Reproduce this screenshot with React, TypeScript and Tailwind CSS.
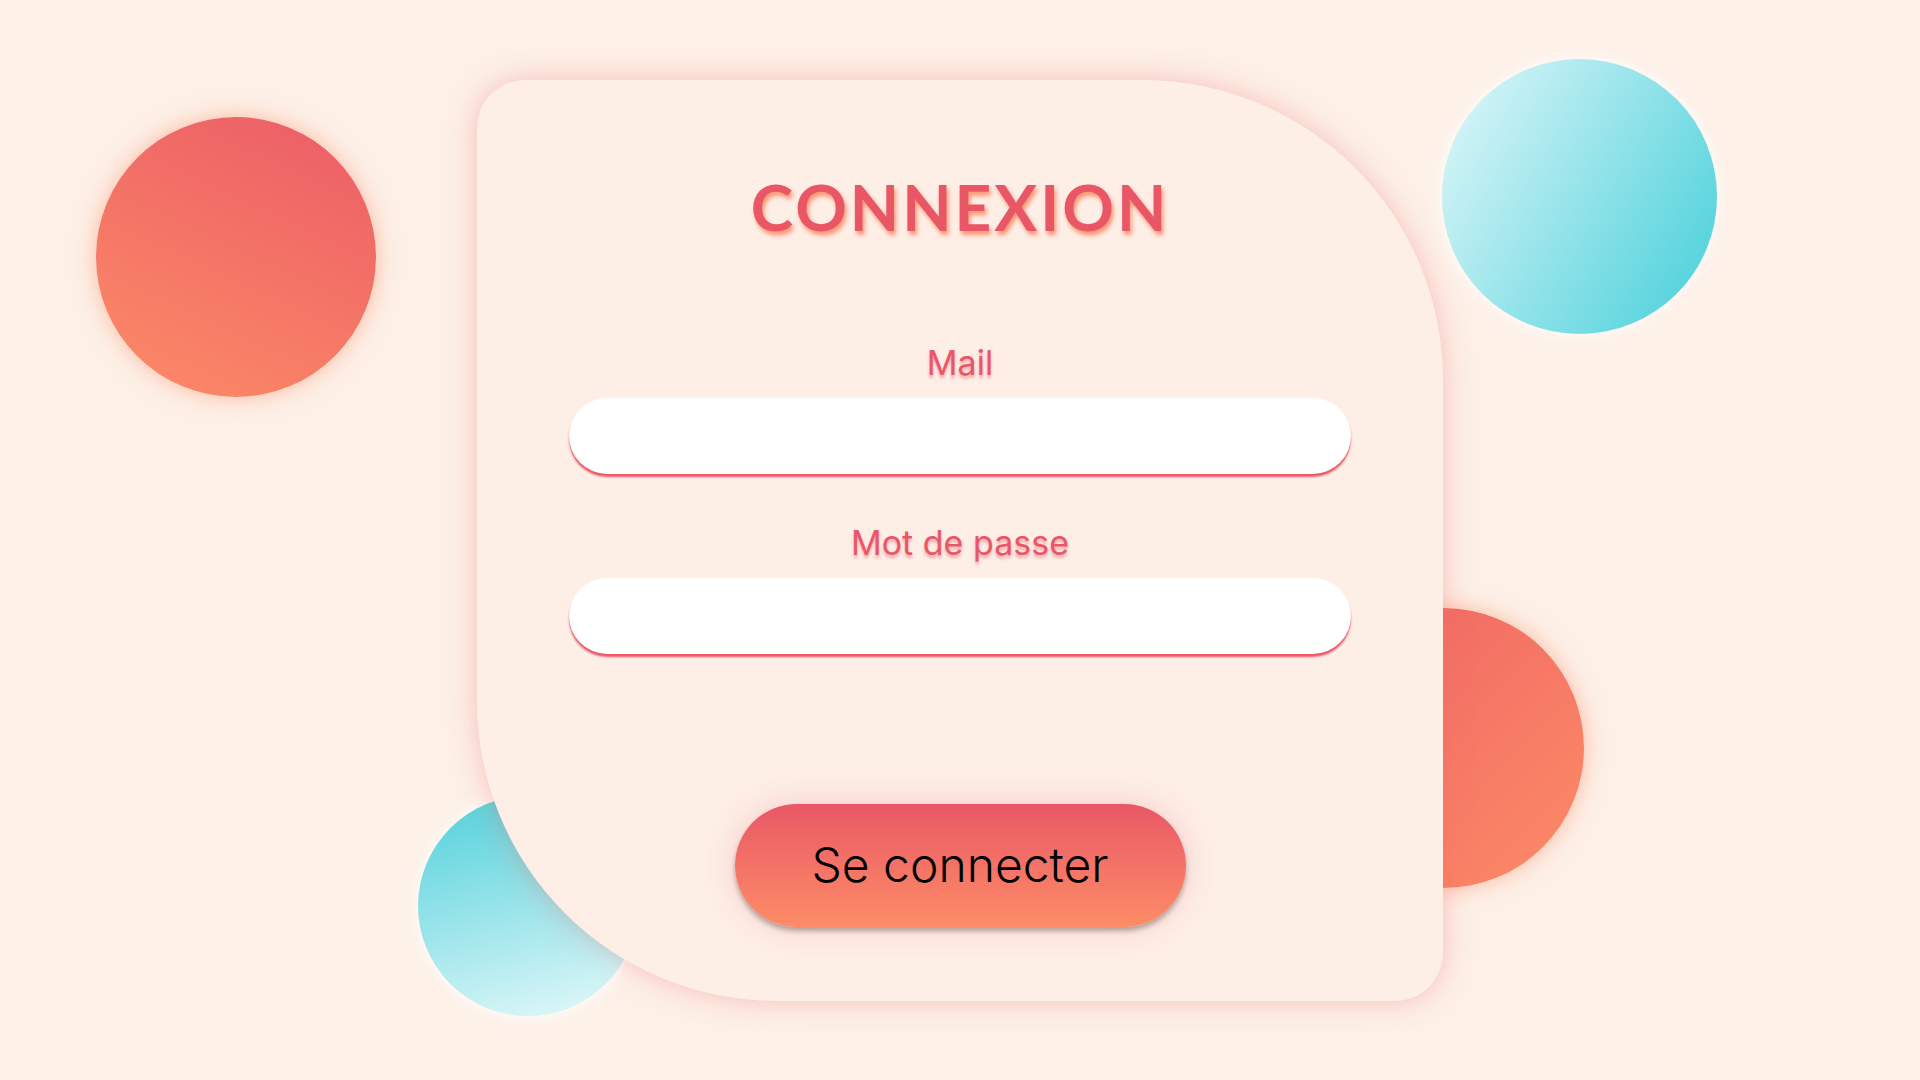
import React from "react";

const Field = ({ label, type }: { label: string; type: string }) => (
  <div className="flex w-[782px] flex-col items-center">
    <label className="mb-[18px] text-[34px] leading-none text-[#e95766] [font-family:Inter,'Noto_Sans',sans-serif] [text-shadow:0_3px_3px_rgba(233,87,102,0.45)]">
      {label}
    </label>
    <input
      type={type}
      className="h-[76px] w-full rounded-full bg-white px-8 text-2xl outline-none shadow-[0_3px_2px_#ea5866]"
    />
  </div>
);

const App = () => {
  return (
    <div className="relative flex h-screen w-full items-center justify-center overflow-hidden bg-[#fdf0e7]">
      {/* decorative bubbles */}
      <div className="absolute left-[96px] top-[117px] h-[280px] w-[280px] rounded-full bg-[linear-gradient(205deg,#eb5c67,#fd8c66)] shadow-[0_0_22px_rgba(253,140,102,0.55)]" />
      <div className="absolute left-[1442px] top-[59px] h-[275px] w-[275px] rounded-full bg-[linear-gradient(120deg,#e3f8fa,#44cfd9)] shadow-[0_0_20px_#ffffff]" />
      <div className="absolute left-[1304px] top-[608px] h-[280px] w-[280px] rounded-full bg-[linear-gradient(135deg,#ee6264,#fd8c66)] shadow-[0_0_22px_rgba(253,140,102,0.55)]" />
      <div className="absolute left-[418px] top-[796px] h-[220px] w-[220px] rounded-full bg-[linear-gradient(165deg,#4fd0da,#e6f9fa)] shadow-[0_0_20px_#ffffff]" />

      <form className="relative flex h-[921px] w-[966px] flex-col items-center rounded-tl-[48px] rounded-tr-[300px] rounded-bl-[300px] rounded-br-[48px] bg-[#fdeee6] pt-[95px] shadow-[0_0_28px_rgba(236,110,110,0.38)]">
        <h1 className="text-[64px] font-bold leading-none tracking-[3px] text-[#e95766] [font-family:Lato,'Noto_Sans',sans-serif] [text-shadow:2px_4px_4px_rgba(252,140,102,0.9)]">
          CONNEXION
        </h1>
        <div className="mt-[107px] flex flex-col items-center gap-[52px]">
          <Field label="Mail" type="email" />
          <Field label="Mot de passe" type="password" />
        </div>
        <button
          type="button"
          className="mt-[150px] h-[123px] w-[451px] rounded-full bg-gradient-to-b from-[#e95766] to-[#fd8c66] text-[48px] font-light text-black [font-family:Inter,'Noto_Sans',sans-serif] shadow-[0_4px_5px_rgba(0,0,0,0.28),0_0_30px_rgba(233,87,102,0.22)]"
        >
          Se connecter
        </button>
      </form>
    </div>
  );
};

export default App;
